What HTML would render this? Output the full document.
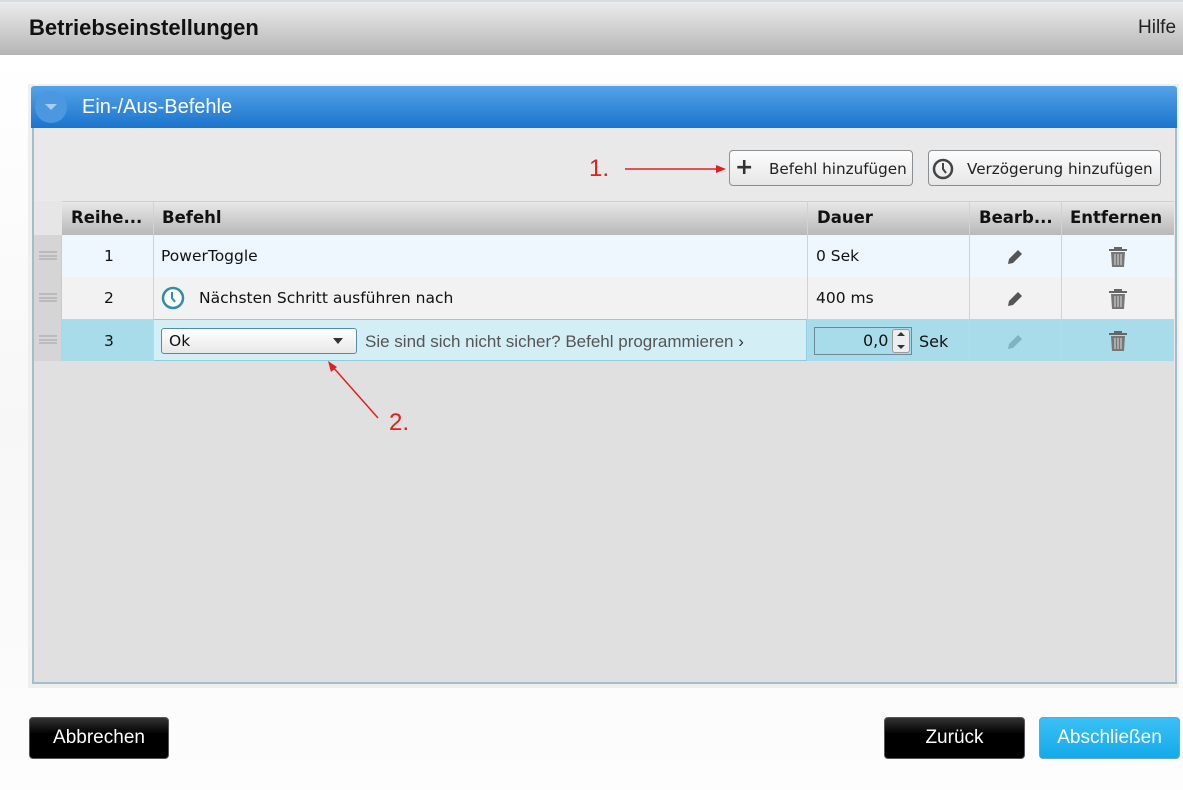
<!DOCTYPE html>
<html><head><meta charset="utf-8"><style>
*{margin:0;padding:0;box-sizing:border-box}
body{width:1183px;height:790px;overflow:hidden;background:#fff;font-family:"Liberation Sans",sans-serif;position:relative}
.a{position:absolute}
.v{font-family:"DejaVu Sans",sans-serif;font-size:15.5px;color:#111}
.hd{font-family:"DejaVu Sans",sans-serif;font-weight:bold;font-size:16.5px;color:#111}
.btn{position:absolute;border:1px solid #8a8f94;border-radius:4px;background:linear-gradient(#fdfdfd,#e6e6e6);font-family:"DejaVu Sans",sans-serif;font-size:15.2px;color:#222}
.bb{position:absolute;border-radius:4px;color:#fff;font-size:19px;text-align:center;line-height:40px;border:1px solid #555}
</style></head><body>
<div class="a" style="left:0;top:0;width:1183px;height:55px;background:linear-gradient(#ececec,#b5b5b5);border-top:2px solid #d8dde2"></div>
<div class="a" style="left:29px;top:15px;font-size:22px;font-weight:bold;color:#111">Betriebseinstellungen</div>
<div class="a" style="left:1138px;top:17px;font-size:19px;color:#222">Hilfe</div>
<div class="a" style="left:0;top:55px;width:1183px;height:735px;background:linear-gradient(#fff,#f7f7f7 50%,#fdfdfd)"></div>
<div class="a" style="left:28px;top:84px;width:1151px;height:604px;background:#efefef"></div>
<div class="a" style="left:31px;top:86px;width:1146px;height:42px;background:linear-gradient(#55a3e9,#1b74cc);border-radius:3px 3px 0 0"></div>
<div class="a" style="left:35px;top:91px;width:32px;height:32px;border-radius:50%;background:#4c98e0"></div>
<div class="a" style="left:45px;top:104px;width:0;height:0;border-left:6px solid transparent;border-right:6px solid transparent;border-top:6px solid #a8cdf0"></div>
<div class="a" style="left:82px;top:96px;font-size:20px;color:#fff">Ein-/Aus-Befehle</div>
<div class="a" style="left:32px;top:128px;width:1145px;height:556px;background:#e9e9e9;border:2px solid #a5bccb;border-top:none"></div>
<div class="btn" style="left:729px;top:150px;width:184px;height:36px"><span class="a" style="left:5px;top:4px;font-size:22px;font-weight:bold;color:#333">+</span><span class="a" style="left:39px;top:9px">Befehl hinzufügen</span></div>
<div class="btn" style="left:928px;top:150px;width:233px;height:36px">
<svg class="a" style="left:3px;top:7px" width="22" height="22" viewBox="0 0 22 22"><circle cx="11" cy="11" r="9" fill="none" stroke="#444" stroke-width="2.5"/><path d="M11 5v6l3 4" fill="none" stroke="#444" stroke-width="2"/></svg>
<span class="a" style="left:38px;top:9px">Verzögerung hinzufügen</span></div>
<div class="a" style="left:34px;top:201px;width:1140px;height:481px;background:#e0e0e0"></div>
<div class="a" style="left:34px;top:201px;width:1140px;height:34px;background:linear-gradient(#e8e8e8,#b8b8b8);border-top:1px solid #c9d2d9"></div>
<div class="a" style="left:34px;top:201px;width:28px;height:160px;background:#d5d5d5;border-right:1px solid #c5cdd3"></div>
<div class="a" style="left:34px;top:201px;width:28px;height:34px;background:#e6e6e6"></div>
<div class="a hd" style="left:71px;top:208px">Reihe...</div>
<div class="a hd" style="left:162px;top:208px">Befehl</div>
<div class="a hd" style="left:817px;top:208px">Dauer</div>
<div class="a hd" style="left:979px;top:208px">Bearb...</div>
<div class="a hd" style="left:1070px;top:208px">Entfernen</div>
<div class="a" style="left:62px;top:235px;width:1112px;height:42px;background:#eef7fd"></div>
<div class="a" style="left:62px;top:277px;width:1112px;height:42px;background:#f2f2f2"></div>
<div class="a" style="left:62px;top:319px;width:1112px;height:42px;background:#a8dcea"></div>
<div class="a" style="left:153px;top:319px;width:654px;height:42px;background:#d4eef6;border:1px solid #8ecde0"></div>
<div class="a" style="left:153px;top:201px;width:1px;height:160px;background:#c9d4dc"></div>
<div class="a" style="left:807px;top:201px;width:1px;height:160px;background:#c9d4dc"></div>
<div class="a" style="left:969px;top:201px;width:1px;height:160px;background:#c9d4dc"></div>
<div class="a" style="left:1061px;top:201px;width:1px;height:160px;background:#c9d4dc"></div>
<div class="a" style="left:39px;top:251px;width:18px;height:9px;border-top:2px solid #bbb;border-bottom:2px solid #bbb"><div style="margin-top:1.5px;height:2px;background:#bbb"></div></div>
<div class="a" style="left:39px;top:293px;width:18px;height:9px;border-top:2px solid #bbb;border-bottom:2px solid #bbb"><div style="margin-top:1.5px;height:2px;background:#bbb"></div></div>
<div class="a" style="left:39px;top:335px;width:18px;height:9px;border-top:2px solid #bbb;border-bottom:2px solid #bbb"><div style="margin-top:1.5px;height:2px;background:#bbb"></div></div>
<div class="a v" style="left:104px;top:247px">1</div>
<div class="a v" style="left:104px;top:289px">2</div>
<div class="a v" style="left:104px;top:332px">3</div>
<div class="a v" style="left:161px;top:247px">PowerToggle</div>
<svg class="a" style="left:161px;top:286px" width="24" height="24" viewBox="0 0 24 24"><circle cx="12" cy="12" r="10" fill="#fff" stroke="#2f8fa8" stroke-width="2.5"/><path d="M11 6v6l3 4" fill="none" stroke="#2f8fa8" stroke-width="2"/></svg>
<div class="a v" style="left:199px;top:289px">Nächsten Schritt ausführen nach</div>
<div class="a v" style="left:816px;top:247px">0 Sek</div>
<div class="a v" style="left:816px;top:289px">400 ms</div>
<div class="a" style="left:161px;top:328px;width:196px;height:26px;border:1px solid #5a8aa0;border-radius:3px;background:linear-gradient(#fff,#e8e8e8)"></div>
<div class="a v" style="left:169px;top:332px;font-size:15.5px">Ok</div>
<div class="a" style="left:333px;top:338px;border-left:5px solid transparent;border-right:5px solid transparent;border-top:6px solid #333"></div>
<div class="a" style="left:365px;top:332px;font-size:17px;color:#555">Sie sind sich nicht sicher? Befehl programmieren <span style="color:#333">›</span></div>
<div class="a" style="left:814px;top:327px;width:98px;height:28px;border:1px solid #6a8a9a;background:#a8dcea"></div>
<div class="a v" style="left:863px;top:331px;font-size:16px">0,0</div>
<div class="a" style="left:892px;top:329px;width:18px;height:24px;background:#eee;border:1px solid #999;border-radius:3px"></div>
<div class="a" style="left:897px;top:332px;border-left:4px solid transparent;border-right:4px solid transparent;border-bottom:4px solid #333"></div>
<div class="a" style="left:897px;top:345px;border-left:4px solid transparent;border-right:4px solid transparent;border-top:4px solid #333"></div>
<div class="a v" style="left:919px;top:332px;font-size:16px">Sek</div>
<svg class="a" style="left:1005px;top:247px" width="20" height="20" viewBox="0 0 20 20"><path d="M3 17l1-5 9-9 4 4-9 9z" fill="#555"/></svg>
<svg class="a" style="left:1005px;top:289px" width="20" height="20" viewBox="0 0 20 20"><path d="M3 17l1-5 9-9 4 4-9 9z" fill="#555"/></svg>
<svg class="a" style="left:1005px;top:332px" width="20" height="20" viewBox="0 0 20 20"><path d="M3 17l1-5 9-9 4 4-9 9z" fill="#7fb3c0"/></svg>
<svg class="a" style="left:1107px;top:246px" width="22" height="22" viewBox="0 0 22 22"><path d="M2 4h18M8 4V2h6v2" stroke="#666" stroke-width="2" fill="none"/><path d="M4 6h14l-1 15H5z" fill="#777"/><path d="M8 8v11M11 8v11M14 8v11" stroke="#ccc" stroke-width="1.2"/></svg>
<svg class="a" style="left:1107px;top:288px" width="22" height="22" viewBox="0 0 22 22"><path d="M2 4h18M8 4V2h6v2" stroke="#666" stroke-width="2" fill="none"/><path d="M4 6h14l-1 15H5z" fill="#777"/><path d="M8 8v11M11 8v11M14 8v11" stroke="#ccc" stroke-width="1.2"/></svg>
<svg class="a" style="left:1107px;top:330px" width="22" height="22" viewBox="0 0 22 22"><path d="M2 4h18M8 4V2h6v2" stroke="#666" stroke-width="2" fill="none"/><path d="M4 6h14l-1 15H5z" fill="#777"/><path d="M8 8v11M11 8v11M14 8v11" stroke="#ccc" stroke-width="1.2"/></svg>
<div class="a" style="left:589px;top:155px;font-size:24px;color:#e02020">1.</div>
<svg class="a" style="left:0;top:0" width="1183" height="790"><path d="M625 169H722" stroke="#e02020" stroke-width="1.5"/><path d="M726 169l-10-4v8z" fill="#e02020"/><path d="M378 418L332 366" stroke="#e02020" stroke-width="1.5"/><path d="M328 361l3 11 6-5z" fill="#e02020"/></svg>
<div class="a" style="left:389px;top:409px;font-size:24px;color:#e02020">2.</div>
<div class="bb" style="left:29px;top:717px;width:140px;height:42px;background:linear-gradient(#333,#000 40%,#000)">Abbrechen</div>
<div class="bb" style="left:884px;top:717px;width:141px;height:42px;background:linear-gradient(#333,#000 40%,#000)">Zurück</div>
<div class="bb" style="left:1039px;top:717px;width:141px;height:42px;background:linear-gradient(#3cc0f5,#14aaea);border-color:#6ab">Abschließen</div>
</body></html>
